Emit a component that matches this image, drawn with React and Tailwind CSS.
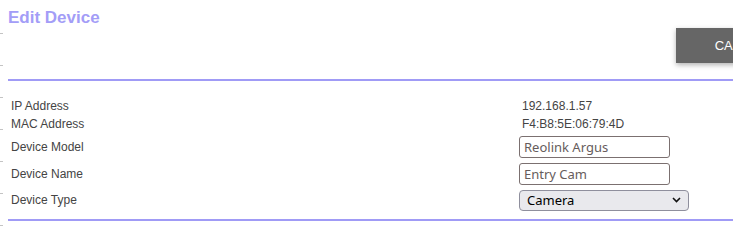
import { useState } from 'react';

function Row({ label, h, children }) {
  return (
    <div className={`flex items-center ${h}`}>
      <div className="w-[511px] pl-[3px] text-[12px] text-[#444]">{label}</div>
      <div className="flex items-center">{children}</div>
    </div>
  );
}

export default function App() {
  const [model, setModel] = useState('Reolink Argus');
  const [name, setName] = useState('Entry Cam');
  const [type, setType] = useState('camera');

  return (
    <div className="relative w-[733px] h-[236px] bg-white overflow-hidden font-['Liberation_Sans',Arial,sans-serif]">
      {/* petits repères gris à gauche */}
      <div className="absolute left-0 top-0 flex flex-col gap-[31px] pt-[33px]">
        {[0, 1, 2, 3, 4, 5, 6].map((i) => (
          <div key={i} className="w-[3px] h-px bg-[#c4c4c4]" />
        ))}
      </div>

      <div className="w-[820px] pl-2">
        <h1 className="pt-2 text-[17px] leading-[19px] font-bold text-[#a39df7]">Edit Device</h1>

        <div className="pl-[668px] pt-px">
          <button className="w-[130px] h-[35px] bg-[#666666] text-white text-[13px] shadow-[0_2px_5px_rgba(0,0,0,0.3)]">
            CANCEL
          </button>
        </div>

        <div className="mt-4 h-[2px] bg-[#a09bf6]" />

        <div className="mt-[16px]">
          <Row label="IP Address" h="h-[18px]">
            <span className="pl-[3px] text-[12px] text-[#444]">192.168.1.57</span>
          </Row>
          <Row label="MAC Address" h="h-[18px]">
            <span className="pl-[3px] text-[12px] text-[#444]">F4:B8:5E:06:79:4D</span>
          </Row>
          <Row label="Device Model" h="h-[27px]">
            <input
              value={model}
              onChange={(e) => setModel(e.target.value)}
              className="w-[151px] h-[22px] px-1 border border-[#7b7070] rounded-[3px] text-[13px] text-[#665c5c] font-['Noto_Sans',sans-serif] outline-none"
            />
          </Row>
          <Row label="Device Name" h="h-[27px]">
            <input
              value={name}
              onChange={(e) => setName(e.target.value)}
              className="w-[151px] h-[22px] px-1 border border-[#7b7070] rounded-[3px] text-[13px] text-[#665c5c] font-['Noto_Sans',sans-serif] outline-none"
            />
          </Row>
          <Row label="Device Type" h="h-[25px]">
            <div className="relative">
              <select
                value={type}
                onChange={(e) => setType(e.target.value)}
                className="appearance-none w-[170px] h-[21px] pl-[7px] bg-[#e9e9ed] border border-[#8f8f9d] rounded-[4px] text-[13px] text-black font-['Noto_Sans',sans-serif] leading-[19px] outline-none"
              >
                <option value="camera">Camera</option>
                <option value="sensor">Sensor</option>
                <option value="light">Light</option>
              </select>
              <svg className="absolute right-[8px] top-[9px] pointer-events-none" width="9" height="6" viewBox="0 0 9 6">
                <path d="M1 1l3.5 3.5L8 1" fill="none" stroke="#111" strokeWidth="1.6" />
              </svg>
            </div>
          </Row>
        </div>

        <div className="mt-[7px] h-[2px] bg-[#a09bf6]" />
      </div>
    </div>
  );
}
